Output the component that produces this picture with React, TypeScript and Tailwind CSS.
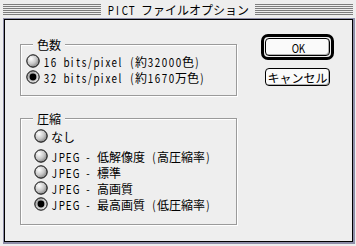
import React from "react";

const cjk = "font-['Noto_Sans_CJK_JP',sans-serif] text-[12px]";
const cellBase = "inline-block text-center font-['Noto_Sans_CJK_JP',sans-serif] text-[12px] scale-x-[0.82]";

// Osaka-style bitmap text: ASCII sits in fixed narrow cells, CJK at 12px
function Txt({ s }: { s: string }) {
  const parts = s.split(/([\x20-\x7e]+)/).filter((p) => p !== "");
  return (
    <span className="whitespace-pre leading-[16px] text-black">
      {parts.map((p, i) =>
        /^[\x20-\x7e]+$/.test(p) ? (
          <span key={i}>
            {p.split("").map((c, j) => (
              <span key={j} className={`${cellBase} ${/[0-9A-Z]/.test(c) ? "w-[7px]" : "w-[6px]"}`}>
                {c}
              </span>
            ))}
          </span>
        ) : (
          <span key={i} className={cjk}>{p}</span>
        )
      )}
    </span>
  );
}

function Radio({ on, id }: { on?: boolean; id: string }) {
  return (
    <svg width="14" height="14" viewBox="0 0 14 14" className="shrink-0">
      <defs>
        <radialGradient id={id} cx="35%" cy="32%" r="75%">
          {on ? (
            <>
              <stop offset="0" stopColor="#9a9a9a" />
              <stop offset="1" stopColor="#e8e8e8" />
            </>
          ) : (
            <>
              <stop offset="0" stopColor="#ffffff" />
              <stop offset="0.55" stopColor="#c8c8c8" />
              <stop offset="1" stopColor="#7a7a7a" />
            </>
          )}
        </radialGradient>
      </defs>
      <circle cx="7" cy="7" r="6.2" fill={`url(#${id})`} stroke="#000" strokeWidth="1" />
      {on && <circle cx="7" cy="7" r="3.4" fill="#000" />}
    </svg>
  );
}

function Row({ label, on, id, indent }: { label: string; on?: boolean; id: string; indent: string }) {
  return (
    <div className={`flex items-center gap-[3px] h-[16px] ${indent}`}>
      <Radio on={on} id={id} />
      <Txt s={label} />
    </div>
  );
}

function Group({ title, children, className }: { title: string; children: React.ReactNode; className?: string }) {
  return (
    <div
      className={`relative w-[217px] border border-[#9a9a9a] shadow-[inset_1px_1px_0_#ffffff,1px_1px_0_#ffffff] ${className ?? ""}`}
    >
      <div className="absolute -top-[9px] left-[12px] px-[4px] bg-[#eeeeee] leading-[16px]">
        <Txt s={title} />
      </div>
      {children}
    </div>
  );
}

const stripes =
  "flex-1 h-[11px] bg-[repeating-linear-gradient(to_bottom,#7d7d7d_0px,#7d7d7d_1px,#eeeeee_1px,#eeeeee_2px)]";

export default function App() {
  return (
    <div className="w-[356px] h-[246px] bg-[#eeeeee] flex flex-col select-none">
      {/* title bar */}
      <div className="h-[18px] flex items-center px-[3px] gap-[6px]">
        <div className={stripes} />
        <Txt s="PICT ファイルオプション" />
        <div className={stripes} />
      </div>

      {/* window frame */}
      <div className="flex-1 ml-[3px] mr-[1px] mb-[2px] border-l border-t border-r-2 border-b-2 border-[#8e8ea8] flex flex-col">
        <div className="flex-1 border border-black bg-[#eeeeee] flex">
          <div className="ml-[15px] mt-[24px] flex flex-col">
            <Group title="色数" className="pt-[8px] pb-[10px]">
              <Row id="r1" indent="pl-[5px]" label="16 bits/pixel (約32000色)" />
              <Row id="r2" indent="pl-[5px]" on label="32 bits/pixel (約1670万色)" />
            </Group>
            <Group title="圧縮" className="mt-[22px] pt-[9px] pb-[12px]">
              <Row id="r3" indent="pl-[13px]" label="なし" />
              <div className="h-[4px]" />
              <Row id="r4" indent="pl-[13px]" label="JPEG - 低解像度 (高圧縮率)" />
              <Row id="r5" indent="pl-[13px]" label="JPEG - 標準" />
              <Row id="r6" indent="pl-[13px]" label="JPEG - 高画質" />
              <Row id="r7" indent="pl-[13px]" on label="JPEG - 最高画質 (低圧縮率)" />
            </Group>
          </div>

          <div className="ml-[24px] mt-[14px] flex flex-col">
            <div className="w-[73px] h-[26px] border-[3px] border-black rounded-[7px] p-[1px]">
              <div className="w-full h-full border border-black rounded-[4px] bg-[#fafafa] shadow-[inset_-1px_-1px_0_#b0b0b0] flex items-center justify-center">
                <Txt s="OK" />
              </div>
            </div>
            <div className="ml-[4px] mt-[8px] w-[65px] h-[18px] border border-black rounded-[4px] bg-[#fafafa] shadow-[inset_-1px_-1px_0_#b0b0b0] flex items-center justify-center">
              <Txt s="キャンセル" />
            </div>
          </div>
        </div>
      </div>
    </div>
  );
}
